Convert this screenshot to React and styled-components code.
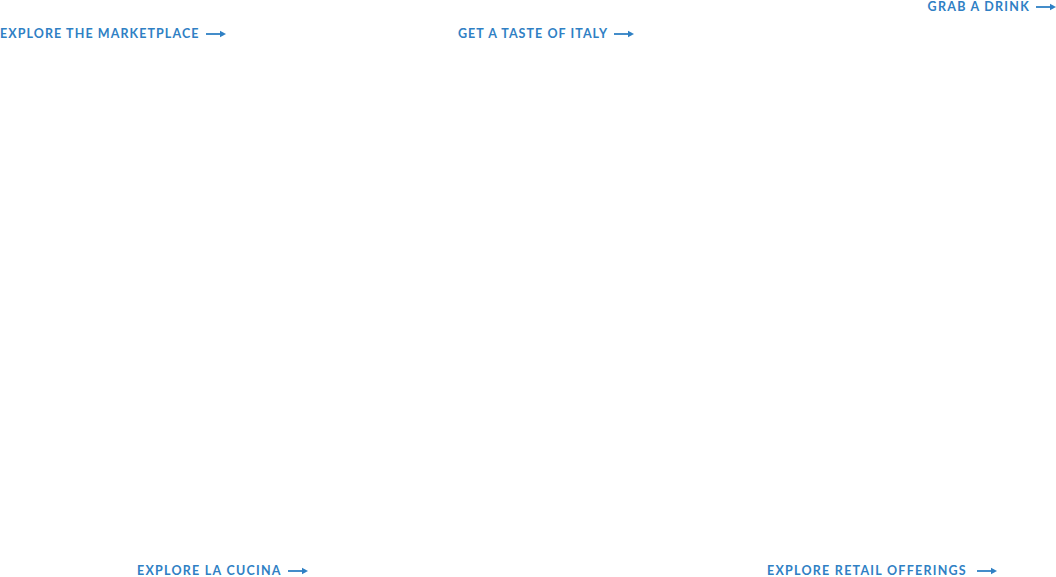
import React from "react";
import styled, { createGlobalStyle } from "styled-components";

const Global = createGlobalStyle`
  html, body { margin: 0; padding: 0; background: #ffffff; }
  body { font-family: Lato, "Open Sans", sans-serif; }
`;

const Page = styled.div`
  width: 1056px;
  height: 577px;
  display: grid;
  grid-template-rows: 1fr auto;
  overflow: hidden;
`;

const TopRow = styled.div`
  display: grid;
  grid-template-columns: 458px 1fr auto;
  align-items: start;
`;

const BottomRow = styled.div`
  display: grid;
  grid-template-columns: 630px 1fr;
  padding-left: 137px;
  height: 12px;
  align-items: start;
`;

const Link = styled.a`
  display: inline-flex;
  align-items: center;
  gap: ${(p) => p.$gap || 6}px;
  margin-top: ${(p) => p.$top || 0}px;
  justify-self: start;
  color: #2f80c4;
  font-family: Lato, "Open Sans", sans-serif;
  font-weight: 700;
  font-size: 12.5px;
  line-height: 12px;
  letter-spacing: ${(p) => p.$spacing || 1.25}px;
  text-transform: uppercase;
  text-decoration: none;
  white-space: nowrap;
`;

const Arrow = () => (
  <svg width="20" height="8" viewBox="0 0 20 8" aria-hidden="true">
    <line x1="0" y1="4" x2="15" y2="4" stroke="#2f80c4" strokeWidth="1.8" />
    <polygon points="14,0.8 20,4 14,7.2" fill="#2f80c4" />
  </svg>
);

export default function App() {
  return (
    <>
      <Global />
      <Page>
        <TopRow>
          <Link href="#" $top={28} $spacing={1.08}>
            Explore the Marketplace <Arrow />
          </Link>
          <Link href="#" $top={28} $spacing={1.05}>
            Get a Taste of Italy <Arrow />
          </Link>
          <Link href="#" $top={1}>
            Grab a Drink <Arrow />
          </Link>
        </TopRow>
        <BottomRow>
          <Link href="#">
            Explore La Cucina <Arrow />
          </Link>
          <Link href="#" $gap={10}>
            Explore Retail Offerings <Arrow />
          </Link>
        </BottomRow>
      </Page>
    </>
  );
}
